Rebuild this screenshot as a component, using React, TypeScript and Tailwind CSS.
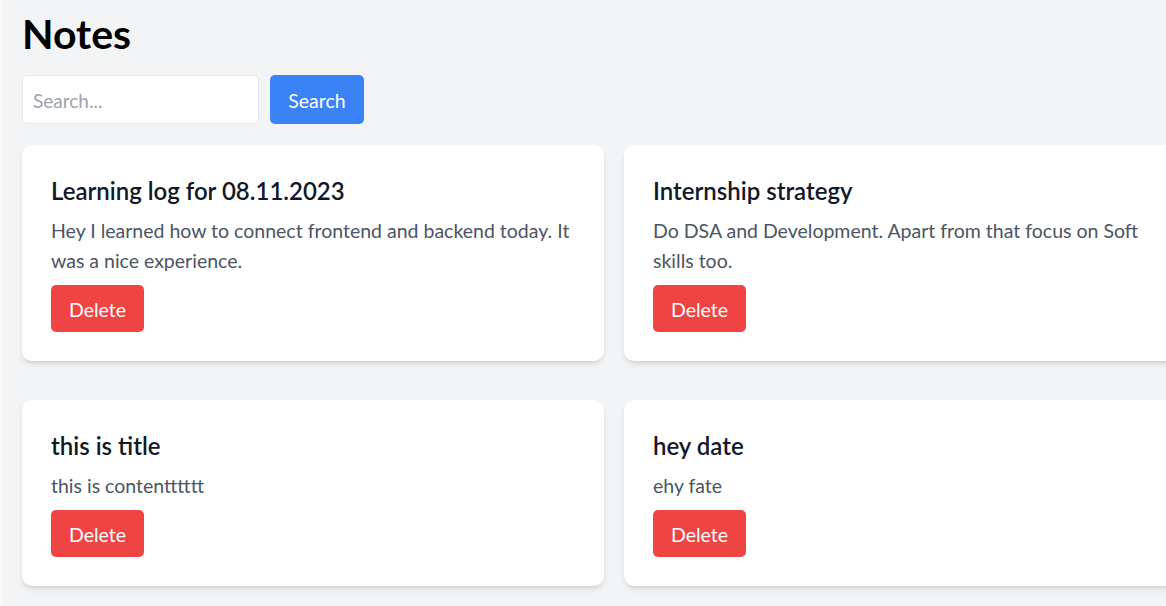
import React from "react";

const notes = [
  {
    title: "Learning log for 08.11.2023",
    content:
      "Hey I learned how to connect frontend and backend today. It was a nice experience.",
  },
  {
    title: "Internship strategy",
    content: "Do DSA and Development. Apart from that focus on Soft skills too.",
  },
  { title: "this is title", content: "this is contentttttt" },
  { title: "hey date", content: "ehy fate" },
];

export default function App() {
  return (
    <div
      className="w-[1166px] h-[606px] overflow-hidden bg-[#f3f4f6] border-l-[2px] border-[#fafafa]"
      style={{ fontFamily: "Lato, 'Open Sans', sans-serif" }}
    >
      <div className="w-[1226px] pl-[20px] pr-[22px] pt-[10px]">
        <h1 className="text-[41px] leading-[48px] font-bold text-black">Notes</h1>
        <div className="mt-[17px] flex gap-[11px]">
          <input
            placeholder="Search..."
            className="w-[237px] h-[49px] rounded-[5px] border border-[#e5e7eb] bg-white px-[10px] pt-[2px] text-[19px] text-gray-700 placeholder:text-[#9ca3af] outline-none"
          />
          <button className="w-[94px] h-[49px] pt-[3px] rounded-[5px] bg-[#3b82f6] text-white text-[19.5px]">
            Search
          </button>
        </div>
        <div className="mt-[21px] grid grid-cols-2 gap-x-[20px] gap-y-[39px]">
          {notes.map((n, i) => (
            <div
              key={i}
              className="rounded-[10px] bg-white p-[29px] shadow-[0_4px_6px_-1px_rgba(0,0,0,0.1),0_2px_4px_-2px_rgba(0,0,0,0.1)]"
            >
              <h2 className="text-[24px] leading-[34px] font-semibold text-[#111827]">
                {n.title}
              </h2>
              <p className="mt-[8px] text-[19.5px] leading-[30px] text-[#4b5563]">
                {n.content}
              </p>
              <button className="mt-[9px] w-[93px] h-[47px] pt-[2px] rounded-[5px] bg-[#ef4444] text-white text-[19.5px]">
                Delete
              </button>
            </div>
          ))}
        </div>
      </div>
    </div>
  );
}
